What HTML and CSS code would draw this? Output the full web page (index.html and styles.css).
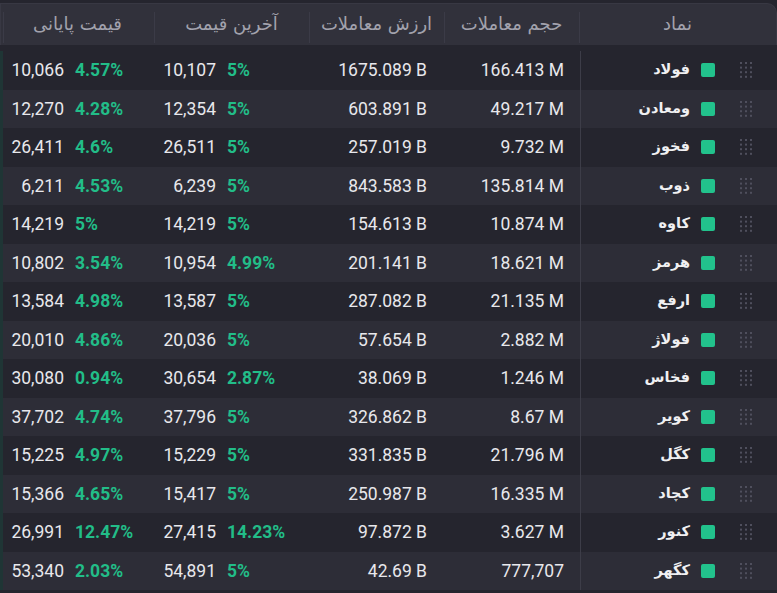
FILE: index.html
```html
<!DOCTYPE html>
<html lang="fa" dir="rtl">
<head>
<meta charset="utf-8">
<title>بازار</title>
<link rel="stylesheet" href="styles.css">
</head>
<body>
<div class="board">
  <div class="head">
    <div class="hc">نماد</div>
    <div class="hc">حجم معاملات</div>
    <div class="hc">ارزش معاملات</div>
    <div class="hc">آخرین قیمت</div>
    <div class="hc hc-last">قیمت پایانی</div>
  </div>
  <div class="rows" id="rows"></div>
</div>
<script src="app.js"></script>
</body>
</html>
```

FILE: app.js
```js
const data = [
  ["فولاد","166.413 M","1675.089 B","10,107","5%","10,066","4.57%"],
  ["ومعادن","49.217 M","603.891 B","12,354","5%","12,270","4.28%"],
  ["فخوز","9.732 M","257.019 B","26,511","5%","26,411","4.6%"],
  ["ذوب","135.814 M","843.583 B","6,239","5%","6,211","4.53%"],
  ["کاوه","10.874 M","154.613 B","14,219","5%","14,219","5%"],
  ["هرمز","18.621 M","201.141 B","10,954","4.99%","10,802","3.54%"],
  ["ارفع","21.135 M","287.082 B","13,587","5%","13,584","4.98%"],
  ["فولاژ","2.882 M","57.654 B","20,036","5%","20,010","4.86%"],
  ["فخاس","1.246 M","38.069 B","30,654","2.87%","30,080","0.94%"],
  ["کویر","8.67 M","326.862 B","37,796","5%","37,702","4.74%"],
  ["کگل","21.796 M","331.835 B","15,229","5%","15,225","4.97%"],
  ["کچاد","16.335 M","250.987 B","15,417","5%","15,366","4.65%"],
  ["کنور","3.627 M","97.872 B","27,415","14.23%","26,991","12.47%"],
  ["کگهر","777,707","42.69 B","54,891","5%","53,340","2.03%"]
];
const handle = '<svg class="grip" width="12" height="16" viewBox="0 0 12 16">' +
  [0,5,10].map(x => [0,4.6,9.2,13.8].map(y => `<rect x="${x}" y="${y}" width="2" height="2"/>`).join('')).join('') +
  '</svg>';
const rows = document.getElementById('rows');
rows.innerHTML = data.map(r => `
  <div class="row">
    <div class="c c-name">${handle}<span class="sq"></span><span class="nm">${r[0]}</span></div>
    <div class="c c-num">${r[1]}</div>
    <div class="c c-num c-val">${r[2]}</div>
    <div class="c c-price"><span class="pn">${r[3]}</span><span class="pp">${r[4]}</span></div>
    <div class="c c-price"><span class="pn">${r[5]}</span><span class="pp">${r[6]}</span></div>
  </div>`).join('');
```

FILE: styles.css
```css
* { box-sizing: border-box; }
html, body {
  margin: 0;
  padding: 0;
  background: #25252e;
  width: 777px;
  height: 593px;
  overflow: hidden;
}
body {
  font-family: Roboto, "DejaVu Sans", sans-serif;
  color: #e8e8ec;
}
.board {
  padding-top: 3px;
}
.head {
  display: grid;
  grid-template-columns: 197px 135px 135px 155px 1fr;
  height: 42px;
  background: #31313b;
  border: 1px solid #383843;
  border-bottom: none;
  border-top-right-radius: 10px;
}
.hc {
  position: relative;
  display: flex;
  align-items: center;
  justify-content: center;
  color: #a2a2ad;
  font-size: 18px;
  font-family: "DejaVu Sans", sans-serif;
  padding-bottom: 2px;
}
.hc::after {
  content: "";
  position: absolute;
  left: 0;
  top: 8px;
  bottom: 2px;
  width: 1px;
  background: #3b3b47;
}
.hc-last::after { left: 2px; }
.rows {
  margin-top: 6px;
  border-left: 3px solid #1f3535;
}
.row {
  display: grid;
  grid-template-columns: 197px 135px 135px 155px 1fr;
  height: 38.5px;
  background: #25252e;
}
.row:nth-child(even) { background: #2d2d37; }
.c {
  display: flex;
  align-items: center;
  font-size: 17.5px;
  white-space: nowrap;
}
.c-name {
  border-left: 1px solid #3d3d48;
  padding-right: 25px;
}
.grip { fill: #4f4f5d; flex: none; }
.sq {
  width: 14px;
  height: 14px;
  border-radius: 2px;
  background: #22c28c;
  margin-right: 25px;
  flex: none;
}
.nm {
  margin-right: 11px;
  font-family: "DejaVu Sans", sans-serif;
  font-weight: bold;
  font-size: 14.5px;
  color: #f0f0f2;
  padding-bottom: 2px;
}
.c-num {
  direction: ltr;
  justify-content: flex-end;
  padding-right: 16px;
}
.c-val { padding-right: 18px; }
.c-price {
  direction: ltr;
  justify-content: flex-start;
  padding-left: 7px;
}
.pn {
  width: 54px;
  text-align: right;
}
.pp {
  margin-left: 11px;
  color: #22bd88;
  font-weight: 700;
}
```
